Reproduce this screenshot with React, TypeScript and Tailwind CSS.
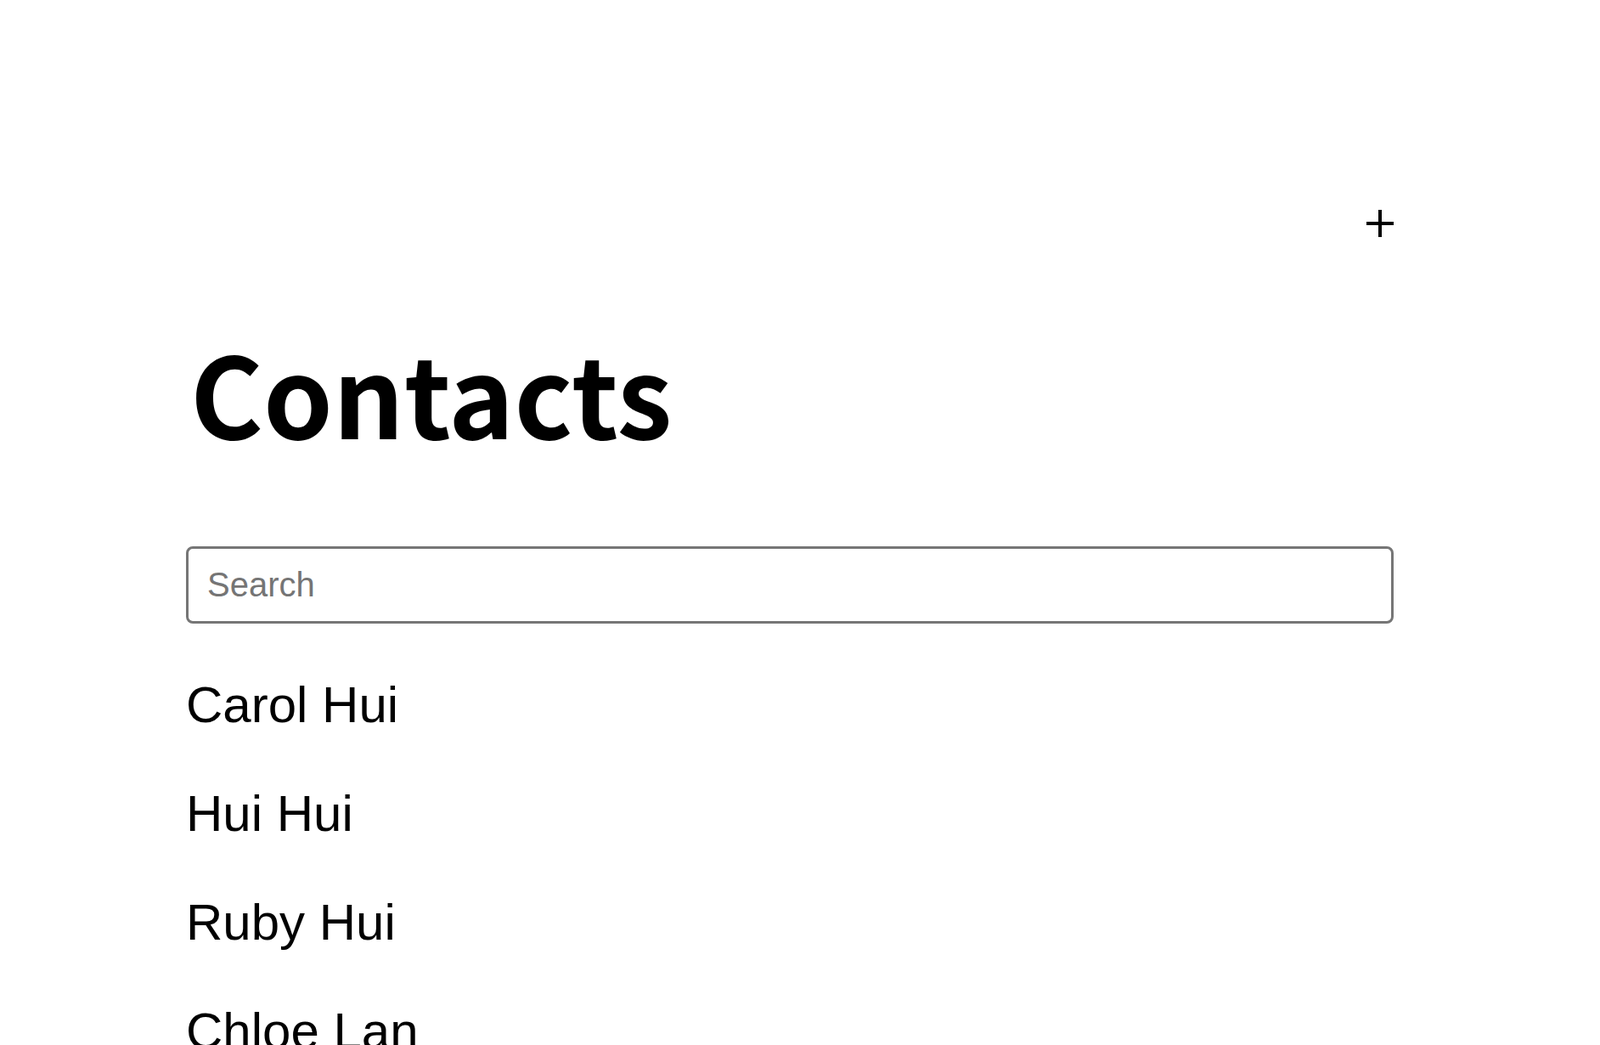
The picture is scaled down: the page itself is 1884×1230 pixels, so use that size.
import React from 'react';

const contacts = ['Carol Hui', 'Hui Hui', 'Ruby Hui', 'Chloe Lan'];

const PlusIcon: React.FC = () => (
  <svg width="32" height="32" viewBox="0 0 32 32" className="text-black">
    <line x1="0" y1="16" x2="32" y2="16" stroke="currentColor" strokeWidth="4" />
    <line x1="16" y1="0" x2="16" y2="32" stroke="currentColor" strokeWidth="4" />
  </svg>
);

const App: React.FC = () => {
  return (
    <div className="min-h-screen bg-white text-black">
      <div className="ml-[219px] w-[1422px] pt-[247px]">
        <div className="flex justify-end h-[32px]">
          <button className="w-[32px] h-[32px] flex items-center justify-center">
            <PlusIcon />
          </button>
        </div>

        <h1 className="mt-[116px] h-[145px] text-[131px] leading-none font-semibold font-['Noto_Sans_CJK_KR',sans-serif] pl-[5px]">
          Contacts
        </h1>

        <input
          type="text"
          placeholder="Search"
          className="mt-[103px] block w-full h-[91px] border-[3px] border-[#767676] rounded-[8px] px-[22px] text-[40px] font-['Liberation_Sans',Arial,sans-serif] placeholder:text-[#757575] outline-none"
        />

        <ul className="mt-[32px]">
          {contacts.map((name) => (
            <li
              key={name}
              className="text-[60px] leading-[128px] font-['Liberation_Sans',Arial,sans-serif]"
            >
              {name}
            </li>
          ))}
        </ul>
      </div>
    </div>
  );
};

export default App;
